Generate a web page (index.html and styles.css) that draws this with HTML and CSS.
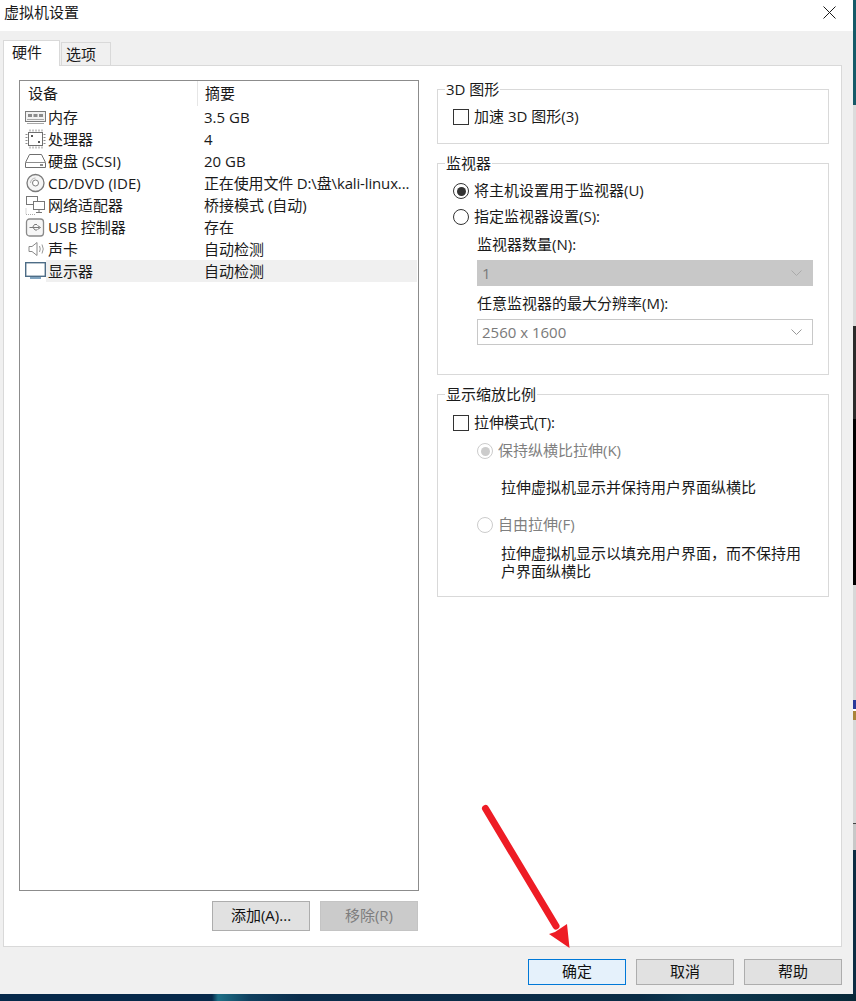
FILE: index.html
```html
<!DOCTYPE html>
<html lang="zh-CN">
<head>
<meta charset="utf-8">
<title>虚拟机设置</title>
<link rel="stylesheet" href="styles.css">
</head>
<body>
<div class="screen">
  <div class="main">
    <div class="window">
      <header class="titlebar">
        <span class="title">虚拟机设置</span>
        <svg class="close" width="13" height="13" viewBox="0 0 13 13"><path d="M.5.5l12 12M12.5.5l-12 12" stroke="#1a1a1a" fill="none"/></svg>
      </header>
      <div class="body">
        <div class="tabs">
          <div class="tab active">硬件</div>
          <div class="tab">选项</div>
        </div>
        <div class="panel">
          <div class="left">
            <div class="listbox">
              <div class="row head"><span class="c1">设备</span><span class="c2">摘要</span></div>
              <div class="row"><span class="dev"><svg class="ico" width="21" height="16" viewBox="0 0 21 16"><rect x=".5" y="2.5" width="20" height="10" fill="#f1f1f1" stroke="#7b7b7b"/><rect x="3" y="5" width="4" height="3" fill="#8c8c8c"/><rect x="8.500" y="5" width="4" height="3" fill="#8c8c8c"/><rect x="14" y="5" width="4" height="3" fill="#8c8c8c"/><path d="M2 10.500h17M2 14.500h17" stroke="#a8a8a8"/></svg><span>内存</span></span><span class="c2">3.5 GB</span></div>
              <div class="row"><span class="dev"><svg class="ico" width="21" height="20" viewBox="0 0 21 20"><rect x="3.500" y="3.500" width="14" height="13" fill="#fff" stroke="#6f6f6f"/><path d="M5 .5v2M8 .5v2M11 .5v2M14 .5v2M17 .5v2M5 17.500v2M8 17.500v2M11 17.500v2M14 17.500v2M17 17.500v2M.5 5.500h2M.5 8.500h2M.5 11.500h2M.5 14.500h2M18.500 5.500h2M18.500 8.500h2M18.500 11.500h2M18.500 14.500h2" stroke="#8d8d8d"/><rect x="6" y="6" width="2" height="2" fill="#555"/><rect x="13" y="12" width="2" height="2" fill="#555"/></svg><span>处理器</span></span><span class="c2">4</span></div>
              <div class="row"><span class="dev"><svg class="ico" width="21" height="16" viewBox="0 0 21 16"><path d="M4.500 1.500h12l4 8v5H.5v-5z" fill="#fff" stroke="#6f6f6f"/><path d="M1 9.500h19" stroke="#8d8d8d"/><rect x="15" y="11" width="3" height="2" fill="#8d8d8d"/></svg><span>硬盘 (SCSI)</span></span><span class="c2">20 GB</span></div>
              <div class="row"><span class="dev"><svg class="ico" width="20" height="20" viewBox="0 0 20 20"><circle cx="10" cy="10" r="8.500" fill="#f5f5f5" stroke="#7b7b7b" stroke-width="1.300"/><circle cx="10" cy="10" r="3" fill="#fff" stroke="#7b7b7b"/><path d="M5 10a5 5 0 0 1 5-5" stroke="#b5b5b5" fill="none"/></svg><span>CD/DVD (IDE)</span></span><span class="c2 path">正在使用文件 D:\盘\kali-linux...</span></div>
              <div class="row"><span class="dev"><svg class="ico" width="21" height="20" viewBox="0 0 21 20"><rect x="1.500" y="1.500" width="11" height="8" fill="#fff" stroke="#777"/><rect x="8.500" y="6.500" width="11" height="8" fill="#fff" stroke="#777"/><path d="M14 15v2M11 17.500h6" stroke="#777"/><path d="M1 13.500v6M1 19.500h10" stroke="#aaa" stroke-dasharray="1 1"/></svg><span>网络适配器</span></span><span class="c2">桥接模式 (自动)</span></div>
              <div class="row"><span class="dev"><svg class="ico" width="20" height="19" viewBox="0 0 20 19"><rect x="1" y="1" width="17" height="17" rx="3" fill="#f6f6f6" stroke="#8a8a8a" stroke-width="1.300"/><path d="M4 9.500h10M12 7.500l3 2-3 2M7 9.500l2-3h2.500M7.500 9.500l2 2.500h2" stroke="#777" fill="none"/></svg><span>USB 控制器</span></span><span class="c2">存在</span></div>
              <div class="row"><span class="dev"><svg class="ico" width="20" height="16" viewBox="0 0 20 16"><path d="M3.500 5.500h3l5-4v13l-5-4h-3z" fill="#fff" stroke="#8a8a8a"/><path d="M14 5q1.500 3 0 6M16.500 3.500q2.500 4.500 0 9" stroke="#999" fill="none"/></svg><span>声卡</span></span><span class="c2">自动检测</span></div>
              <div class="row selected"><span class="dev"><svg class="ico" width="21" height="18" viewBox="0 0 21 18"><rect x=".7" y=".7" width="19.600" height="13.600" fill="#fff" stroke="#4d6c86" stroke-width="1.400"/><rect x="5" y="15" width="11" height="2" fill="#7fa3bf"/></svg><span>显示器</span></span><span class="c2">自动检测</span></div>
            </div>
            <div class="left-actions">
              <button class="btn">添加(A)...</button>
              <button class="btn disabled">移除(R)</button>
            </div>
          </div>
          <div class="right">
            <section class="group g3d">
              <span class="legend">3D 图形</span>
              <label class="opt"><span class="check"></span><span>加速 3D 图形(3)</span></label>
            </section>
            <section class="group gmon">
              <span class="legend">监视器</span>
              <label class="opt"><span class="radio on"></span><span>将主机设置用于监视器(U)</span></label>
              <label class="opt"><span class="radio"></span><span>指定监视器设置(S):</span></label>
              <div class="sub">
                <div class="field-label first">监视器数量(N):</div>
                <div class="select off"><span>1</span><svg width="11" height="6" viewBox="0 0 11 6"><path d="M.5.500l5 5 5-5" stroke="#aaa" fill="none"/></svg></div>
                <div class="field-label">任意监视器的最大分辨率(M):</div>
                <div class="select"><span>2560 x 1600</span><svg width="11" height="6" viewBox="0 0 11 6"><path d="M.5.500l5 5 5-5" stroke="#999" fill="none"/></svg></div>
              </div>
            </section>
            <section class="group gscale">
              <span class="legend">显示缩放比例</span>
              <label class="opt"><span class="check"></span><span>拉伸模式(T):</span></label>
              <div class="sub">
                <label class="opt dim r1"><span class="radio dimmed on"></span><span>保持纵横比拉伸(K)</span></label>
                <p class="desc d1">拉伸虚拟机显示并保持用户界面纵横比</p>
                <label class="opt dim r2"><span class="radio dimmed"></span><span>自由拉伸(F)</span></label>
                <p class="desc d2">拉伸虚拟机显示以填充用户界面，而不保持用户界面纵横比</p>
              </div>
            </section>
          </div>
        </div>
        <footer class="footer">
          <button class="btn primary">确定</button>
          <button class="btn">取消</button>
          <button class="btn">帮助</button>
        </footer>
      </div>
    </div>
    <div class="strip">
      <i class="s-teal"></i><i class="s-gray1"></i><i class="s-dark"></i><i class="s-gray2"></i><i class="s-mark"></i><i class="s-gray3"></i><i class="s-line"></i><i class="s-gray4"></i><i class="s-navy"></i>
    </div>
  </div>
  <div class="desktop"></div>
  <svg class="arrow" width="856" height="1001" viewBox="0 0 856 1001"><path d="M485.500 808.500L556 926" stroke="#ee1c25" stroke-width="7" stroke-linecap="round" fill="none"/><path d="M569.500 948L549 934l6-2 12-8z" fill="#ee1c25"/></svg>
</div>
</body>
</html>
```
FILE: styles.css
```css
* { box-sizing: border-box; }
html, body { margin: 0; padding: 0; }
body {
  width: 856px;
  height: 1001px;
  overflow: hidden;
  font-family: "Open Sans", "Noto Sans CJK SC", sans-serif;
  font-size: 15px;
  color: #1a1a1a;
  background: #fff;
}
.screen { position: relative; width: 856px; height: 1001px; display: flex; flex-direction: column; }
.main { display: flex; height: 994px; }
.window { width: 853px; display: flex; flex-direction: column; background: #f0f0f0; }
.titlebar { height: 31px; background: #fff; display: flex; align-items: flex-start; justify-content: space-between; padding: 0 17px 0 4px; flex: none; }
.title { line-height: 24px; }
.close { margin-top: 6px; }
.body { flex: 1; display: flex; flex-direction: column; padding: 9px 11px 10px 3px; }
.tabs { display: flex; height: 25px; align-items: flex-end; flex: none; position: relative; z-index: 1; }
.tab { height: 23px; width: 50px; margin-left: 1px; border: 1px solid #d9d9d9; border-bottom: 0; background: #f0f0f0; line-height: 22px; padding-left: 4px; }
.tab.active { height: 26px; width: 57px; margin: 0 0 -1px; background: #fff; line-height: 22px; padding-left: 8px; }
.panel { height: 882px; flex: none; background: #fff; border: 1px solid #d9d9d9; padding: 14px 13px 14px 15px; display: flex; gap: 18px; }
.left { width: 400px; display: flex; flex-direction: column; flex: none; }
.listbox { height: 811px; border: 1px solid #8c8c8c; padding: 0 1px 0 0; flex: none; }
.row { display: flex; height: 22px; line-height: 22px; white-space: nowrap; }
.row.head { height: 25px; line-height: 24px; }
.c1 { width: 177px; flex: none; padding-left: 8px; }
.c2 { flex: 1; padding-left: 7px; }
.head .c2 { border-left: 1px solid #e6e6e6; padding-left: 7px; }
.path { letter-spacing: -.15px; }
.dev { display: flex; align-items: center; padding-left: 5px; width: 177px; flex: none; }
.ico { width: 21px; flex: none; margin-right: 2px; }
.row.selected { background: linear-gradient(to right, #fff 26px, #f0f0f0 26px); }
.left-actions { display: flex; justify-content: flex-end; gap: 10px; margin-top: 10px; padding-right: 1px; }
.btn { width: 98px; height: 30px; padding: 0 0 3px; font: inherit; color: #111; background: #e1e1e1; border: 1px solid #adadad; }
.btn.disabled { background: #cbcbcb; border-color: #c4c4c4; color: #7d7d7d; }
.right { width: 392px; flex: none; padding-top: 9px; display: flex; flex-direction: column; gap: 19px; }
.group { position: relative; border: 1px solid #d9d9d9; padding-left: 15px; padding-right: 15px; }
.g3d { height: 55px; padding-top: 14px; }
.gmon { height: 212px; padding-top: 14px; }
.gscale { height: 203px; padding-top: 15px; }
.legend { position: absolute; left: 7px; top: -11px; background: #fff; padding: 0 1px; line-height: 20px; }
.opt { display: flex; align-items: flex-start; height: 26px; line-height: 24px; }
.check { width: 16px; height: 16px; border: 1px solid #333; background: #fff; margin: 5px 5px 0 0; flex: none; }
.radio { width: 16px; height: 16px; border: 1px solid #333; border-radius: 50%; background: #fff; margin: 5px 5px 0 0; flex: none; position: relative; }
.radio.on::after { content: ""; position: absolute; left: 2.500px; top: 2.500px; width: 9px; height: 9px; border-radius: 50%; background: #333; }
.radio.dimmed { border-color: #ccc; }
.radio.dimmed.on::after { background: #ccc; }
.sub { margin-left: 24px; }
.field-label { height: 22px; line-height: 20px; margin-top: 7px; }
.field-label.first { margin-top: 4px; }
.select { margin-top: 4px; height: 26px; display: flex; align-items: center; justify-content: space-between; padding: 0 10px 0 4px; border: 1px solid #c8c8c8; color: #7a7a7a; background: #fff; }
.select.off { background: #c8c8c8; }
.dim { color: #808080; }
.r1 { margin-top: 2px; }
.desc { margin: 0; padding-left: 24px; line-height: 18px; }
.d1 { margin-top: 14px; }
.r2 { margin-top: 16px; }
.d2 { margin-top: 6px; }
.footer { display: flex; justify-content: flex-end; gap: 10px; margin-top: 12px; flex: none; }
.footer .btn { height: 26px; }
.btn.primary { background: #e5f1fb; border-color: #0078d7; }
.strip { width: 3px; display: flex; flex-direction: column; flex: none; }
.strip i { display: block; }
.s-teal { height: 105px; background: #155a68; }
.s-gray1 { height: 221px; background: #dcdcdc; }
.s-dark { height: 259px; background: linear-gradient(#2b2b2b 0 36%, #000 36%); }
.s-gray2 { height: 115px; background: #d8d8d8; }
.s-mark { height: 20px; background: linear-gradient(#2a3a9a 0 45%, #fff 45% 55%, #a9843a 55%); }
.s-gray3 { height: 103px; background: #d8d8d8; }
.s-line { height: 1px; background: #444; }
.s-gray4 { height: 26px; background: #c8c8c8; }
.s-navy { flex: 1; background: #0c2c42; }
.desktop { flex: 1; background: linear-gradient(to right, #06294a 0 212px, #1e6f86 218px, #0f3f5e 250px, #0a2d4c 300px, #0a2c45 640px, #0e3a52 690px, #082838 856px); }
.arrow { position: absolute; left: 0; top: 0; pointer-events: none; }
```
